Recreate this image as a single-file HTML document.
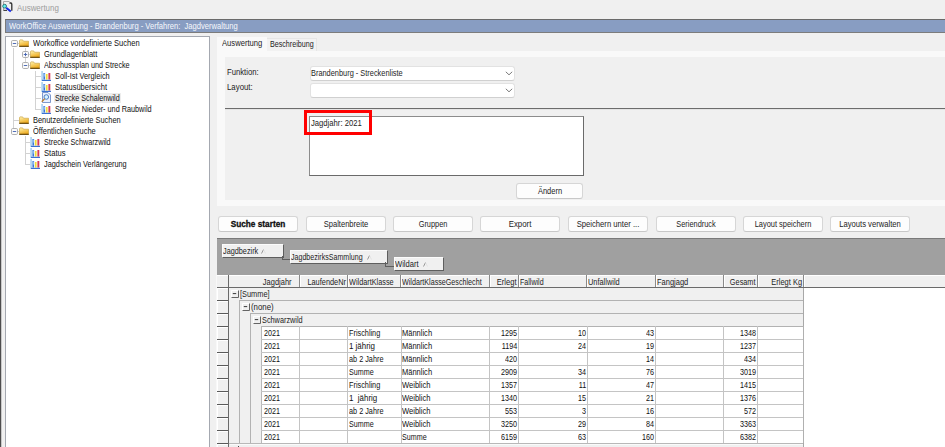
<!DOCTYPE html>
<html><head><meta charset="utf-8"><style>
html,body{margin:0;padding:0;width:945px;height:447px;overflow:hidden;background:#f0f0f0;position:relative}
body>div,body>svg{position:absolute}
.t{position:absolute;white-space:nowrap;font-family:"Liberation Sans",sans-serif;font-size:9px;line-height:9px;transform-origin:0 0}
.t.r{transform-origin:100% 0;text-align:right}
.t.c{text-align:center;transform-origin:50% 0}
</style></head><body>
<div style="left:0px;top:0px;width:1px;height:447px;background:#4d4d4d"></div>
<div style="left:1px;top:0px;width:1px;height:447px;background:#c8c8c8"></div>
<svg style="left:2px;top:0px" width="12" height="13" viewBox="0 0 12 13">
<path d="M1.5 10.5 V1.5 H7.5" fill="none" stroke="#a8a8a8" stroke-width="1"/>
<path d="M7.5 3 H8.8 Q9.8 3 9.8 4.2 V10.8" fill="none" stroke="#2e2e2e" stroke-width="1.3"/>
<path d="M1.5 10.4 H5" fill="none" stroke="#3a3a3a" stroke-width="1.1"/>
<line x1="4.2" y1="7.8" x2="8.8" y2="11.6" stroke="#1428e8" stroke-width="2"/>
<circle cx="2.6" cy="6.2" r="1.9" fill="#5ef2f2" stroke="#1e5a5a" stroke-width="0.8"/>
</svg>
<div class="t" style="left:17.0px;top:4px;font-size:9px;color:#9c9c9c;font-weight:normal;transform:scaleX(0.88);">Auswertung</div>
<div style="left:5px;top:19px;width:940px;height:14px;background:#889dc2;border-top:1px solid #6a6a6a;border-left:1px solid #7a7a7a;border-bottom:1px solid #7c7c7c;box-sizing:border-box"></div>
<div class="t" style="left:8.5px;top:22px;font-size:9px;color:#f6f8fc;font-weight:normal;transform:scaleX(0.843);">WorkOffice Auswertung - Brandenburg - Verfahren:&nbsp; Jagdverwaltung</div>
<div style="left:5px;top:36px;width:205px;height:420px;background:#fff;border:1px solid #a4a8b0;box-sizing:border-box"></div>
<div style="left:13px;top:48px;width:1px;height:80px;background:#d2d2d2"></div>
<div style="left:13px;top:120px;width:6px;height:1px;background:#d2d2d2"></div>
<div style="left:25px;top:48px;width:1px;height:14px;background:#d2d2d2"></div>
<div style="left:28px;top:54px;width:2px;height:1px;background:#d2d2d2"></div>
<div style="left:28px;top:65px;width:2px;height:1px;background:#d2d2d2"></div>
<div style="left:35px;top:71px;width:1px;height:39px;background:#d2d2d2"></div>
<div style="left:35px;top:76px;width:6px;height:1px;background:#d2d2d2"></div>
<div style="left:35px;top:87px;width:6px;height:1px;background:#d2d2d2"></div>
<div style="left:35px;top:98px;width:6px;height:1px;background:#d2d2d2"></div>
<div style="left:35px;top:109px;width:6px;height:1px;background:#d2d2d2"></div>
<div style="left:25px;top:136px;width:1px;height:29px;background:#d2d2d2"></div>
<div style="left:25px;top:142px;width:5px;height:1px;background:#d2d2d2"></div>
<div style="left:25px;top:153px;width:5px;height:1px;background:#d2d2d2"></div>
<div style="left:25px;top:164px;width:5px;height:1px;background:#d2d2d2"></div>
<div style="left:17px;top:43px;width:2px;height:1px;background:#d2d2d2"></div>
<div style="left:17px;top:131px;width:2px;height:1px;background:#d2d2d2"></div>
<div style="left:54px;top:93px;width:67px;height:10px;background:#ededed"></div>
<svg style="left:11px;top:40px" width="7" height="7" viewBox="0 0 7 7">
<rect x="0.5" y="0.5" width="6" height="6" rx="1.2" fill="#fbfbfb" stroke="#a8a8a8" stroke-width="0.9"/>
<line x1="1.8" y1="3.5" x2="5.2" y2="3.5" stroke="#4060b0" stroke-width="0.9"/></svg>
<svg style="left:19px;top:39px" width="10" height="8" viewBox="0 0 11 9" preserveAspectRatio="none">
<defs><linearGradient id="fg" x1="0" y1="0" x2="0.4" y2="1"><stop offset="0" stop-color="#fff4b0"/><stop offset="1" stop-color="#eeaa1c"/></linearGradient></defs>
<path d="M0.5 1.5 V8.5 H10.5 V2.5 H5 L4 1 H1 Z" fill="url(#fg)" stroke="#c8a040" stroke-width="0.7"/>
<rect x="0.3" y="7.6" width="10.4" height="1.2" fill="#5a3e08"/>
</svg>
<div class="t" style="left:32.5px;top:39px;font-size:9px;color:#101010;font-weight:normal;transform:scaleX(0.8383);">Workoffice vordefinierte Suchen</div>
<svg style="left:22px;top:51px" width="7" height="7" viewBox="0 0 7 7">
<rect x="0.5" y="0.5" width="6" height="6" rx="1.2" fill="#fbfbfb" stroke="#a8a8a8" stroke-width="0.9"/>
<line x1="1.8" y1="3.5" x2="5.2" y2="3.5" stroke="#4060b0" stroke-width="0.9"/><line x1="3.5" y1="1.8" x2="3.5" y2="5.2" stroke="#4060b0" stroke-width="0.9"/></svg>
<svg style="left:30px;top:50px" width="10" height="8" viewBox="0 0 11 9" preserveAspectRatio="none">
<defs><linearGradient id="fg" x1="0" y1="0" x2="0.4" y2="1"><stop offset="0" stop-color="#fff4b0"/><stop offset="1" stop-color="#eeaa1c"/></linearGradient></defs>
<path d="M0.5 1.5 V8.5 H10.5 V2.5 H5 L4 1 H1 Z" fill="url(#fg)" stroke="#c8a040" stroke-width="0.7"/>
<rect x="0.3" y="7.6" width="10.4" height="1.2" fill="#5a3e08"/>
</svg>
<div class="t" style="left:43.5px;top:50px;font-size:9px;color:#101010;font-weight:normal;transform:scaleX(0.8317);">Grundlagenblatt</div>
<svg style="left:22px;top:62px" width="7" height="7" viewBox="0 0 7 7">
<rect x="0.5" y="0.5" width="6" height="6" rx="1.2" fill="#fbfbfb" stroke="#a8a8a8" stroke-width="0.9"/>
<line x1="1.8" y1="3.5" x2="5.2" y2="3.5" stroke="#4060b0" stroke-width="0.9"/></svg>
<svg style="left:30px;top:61px" width="10" height="8" viewBox="0 0 11 9" preserveAspectRatio="none">
<defs><linearGradient id="fg" x1="0" y1="0" x2="0.4" y2="1"><stop offset="0" stop-color="#fff4b0"/><stop offset="1" stop-color="#eeaa1c"/></linearGradient></defs>
<path d="M0.5 1.5 V8.5 H10.5 V2.5 H5 L4 1 H1 Z" fill="url(#fg)" stroke="#c8a040" stroke-width="0.7"/>
<rect x="0.3" y="7.6" width="10.4" height="1.2" fill="#5a3e08"/>
</svg>
<div class="t" style="left:43.5px;top:61px;font-size:9px;color:#101010;font-weight:normal;transform:scaleX(0.8036);">Abschussplan und Strecke</div>
<svg style="left:41px;top:71px" width="10" height="10" viewBox="0 0 10 10">
<rect x="0.2" y="0" width="1.8" height="10" fill="#b4d6f2"/>
<rect x="2.4" y="2" width="1.7" height="6.6" fill="#3c7ad8"/>
<rect x="2.9" y="2.6" width="0.6" height="3" fill="#c8f4ff"/>
<rect x="4.9" y="3" width="1.7" height="5.6" fill="#f2dc38"/>
<rect x="7.4" y="2" width="1.9" height="6.6" fill="#d63a58"/>
<rect x="1" y="8.8" width="9" height="1.2" fill="#3a72d2"/>
</svg>
<div class="t" style="left:54.5px;top:72px;font-size:9px;color:#101010;font-weight:normal;transform:scaleX(0.8153);">Soll-Ist Vergleich</div>
<svg style="left:41px;top:82px" width="10" height="10" viewBox="0 0 10 10">
<rect x="0.2" y="0" width="1.8" height="10" fill="#b4d6f2"/>
<rect x="2.4" y="2" width="1.7" height="6.6" fill="#3c7ad8"/>
<rect x="2.9" y="2.6" width="0.6" height="3" fill="#c8f4ff"/>
<rect x="4.9" y="3" width="1.7" height="5.6" fill="#f2dc38"/>
<rect x="7.4" y="2" width="1.9" height="6.6" fill="#d63a58"/>
<rect x="1" y="8.8" width="9" height="1.2" fill="#3a72d2"/>
</svg>
<div class="t" style="left:54.5px;top:83px;font-size:9px;color:#101010;font-weight:normal;transform:scaleX(0.8392);">Statusübersicht</div>
<svg style="left:41px;top:92px" width="10" height="11" viewBox="0 0 10 11">
<path d="M1.5 0.5 H7 L9.5 3 V10.5 H1.5 Z" fill="#e8f0ff" stroke="#6080c0" stroke-width="0.8"/>
<circle cx="5.3" cy="5" r="2.3" fill="#d8f4ff" stroke="#4070c0" stroke-width="0.9"/>
<line x1="3.6" y1="6.8" x2="0.8" y2="9.8" stroke="#c08030" stroke-width="1.3"/>
</svg>
<div class="t" style="left:54.5px;top:94px;font-size:9px;color:#101010;font-weight:normal;transform:scaleX(0.7975);">Strecke Schalenwild</div>
<svg style="left:41px;top:104px" width="10" height="10" viewBox="0 0 10 10">
<rect x="0.2" y="0" width="1.8" height="10" fill="#b4d6f2"/>
<rect x="2.4" y="2" width="1.7" height="6.6" fill="#3c7ad8"/>
<rect x="2.9" y="2.6" width="0.6" height="3" fill="#c8f4ff"/>
<rect x="4.9" y="3" width="1.7" height="5.6" fill="#f2dc38"/>
<rect x="7.4" y="2" width="1.9" height="6.6" fill="#d63a58"/>
<rect x="1" y="8.8" width="9" height="1.2" fill="#3a72d2"/>
</svg>
<div class="t" style="left:54.5px;top:105px;font-size:9px;color:#101010;font-weight:normal;transform:scaleX(0.8083);">Strecke Nieder- und Raubwild</div>
<svg style="left:19px;top:116px" width="10" height="8" viewBox="0 0 11 9" preserveAspectRatio="none">
<defs><linearGradient id="fg" x1="0" y1="0" x2="0.4" y2="1"><stop offset="0" stop-color="#fff4b0"/><stop offset="1" stop-color="#eeaa1c"/></linearGradient></defs>
<path d="M0.5 1.5 V8.5 H10.5 V2.5 H5 L4 1 H1 Z" fill="url(#fg)" stroke="#c8a040" stroke-width="0.7"/>
<rect x="0.3" y="7.6" width="10.4" height="1.2" fill="#5a3e08"/>
</svg>
<div class="t" style="left:32.5px;top:116px;font-size:9px;color:#101010;font-weight:normal;transform:scaleX(0.8264);">Benutzerdefinierte Suchen</div>
<svg style="left:11px;top:128px" width="7" height="7" viewBox="0 0 7 7">
<rect x="0.5" y="0.5" width="6" height="6" rx="1.2" fill="#fbfbfb" stroke="#a8a8a8" stroke-width="0.9"/>
<line x1="1.8" y1="3.5" x2="5.2" y2="3.5" stroke="#4060b0" stroke-width="0.9"/></svg>
<svg style="left:19px;top:127px" width="10" height="8" viewBox="0 0 11 9" preserveAspectRatio="none">
<defs><linearGradient id="fg" x1="0" y1="0" x2="0.4" y2="1"><stop offset="0" stop-color="#fff4b0"/><stop offset="1" stop-color="#eeaa1c"/></linearGradient></defs>
<path d="M0.5 1.5 V8.5 H10.5 V2.5 H5 L4 1 H1 Z" fill="url(#fg)" stroke="#c8a040" stroke-width="0.7"/>
<rect x="0.3" y="7.6" width="10.4" height="1.2" fill="#5a3e08"/>
</svg>
<div class="t" style="left:32.5px;top:127px;font-size:9px;color:#101010;font-weight:normal;transform:scaleX(0.8257);">Öffentlichen Suche</div>
<svg style="left:30px;top:137px" width="10" height="10" viewBox="0 0 10 10">
<rect x="0.2" y="0" width="1.8" height="10" fill="#b4d6f2"/>
<rect x="2.4" y="2" width="1.7" height="6.6" fill="#3c7ad8"/>
<rect x="2.9" y="2.6" width="0.6" height="3" fill="#c8f4ff"/>
<rect x="4.9" y="3" width="1.7" height="5.6" fill="#f2dc38"/>
<rect x="7.4" y="2" width="1.9" height="6.6" fill="#d63a58"/>
<rect x="1" y="8.8" width="9" height="1.2" fill="#3a72d2"/>
</svg>
<div class="t" style="left:43.5px;top:138px;font-size:9px;color:#101010;font-weight:normal;transform:scaleX(0.8026);">Strecke Schwarzwild</div>
<svg style="left:30px;top:148px" width="10" height="10" viewBox="0 0 10 10">
<rect x="0.2" y="0" width="1.8" height="10" fill="#b4d6f2"/>
<rect x="2.4" y="2" width="1.7" height="6.6" fill="#3c7ad8"/>
<rect x="2.9" y="2.6" width="0.6" height="3" fill="#c8f4ff"/>
<rect x="4.9" y="3" width="1.7" height="5.6" fill="#f2dc38"/>
<rect x="7.4" y="2" width="1.9" height="6.6" fill="#d63a58"/>
<rect x="1" y="8.8" width="9" height="1.2" fill="#3a72d2"/>
</svg>
<div class="t" style="left:43.5px;top:149px;font-size:9px;color:#101010;font-weight:normal;transform:scaleX(0.8497);">Status</div>
<svg style="left:30px;top:159px" width="10" height="10" viewBox="0 0 10 10">
<rect x="0.2" y="0" width="1.8" height="10" fill="#b4d6f2"/>
<rect x="2.4" y="2" width="1.7" height="6.6" fill="#3c7ad8"/>
<rect x="2.9" y="2.6" width="0.6" height="3" fill="#c8f4ff"/>
<rect x="4.9" y="3" width="1.7" height="5.6" fill="#f2dc38"/>
<rect x="7.4" y="2" width="1.9" height="6.6" fill="#d63a58"/>
<rect x="1" y="8.8" width="9" height="1.2" fill="#3a72d2"/>
</svg>
<div class="t" style="left:43.5px;top:160px;font-size:9px;color:#101010;font-weight:normal;transform:scaleX(0.8137);">Jagdschein Verlängerung</div>
<div style="left:217px;top:37px;width:50px;height:14px;background:#f9f9f9"></div>
<div class="t" style="left:221.5px;top:39px;font-size:9px;color:#1c1c1c;font-weight:normal;transform:scaleX(0.8474);">Auswertung</div>
<div style="left:267px;top:38px;width:50px;height:13px;background:#f2f2f2;border-top:1px solid #e6e6e6;border-right:1px solid #e6e6e6;box-sizing:border-box"></div>
<div class="t" style="left:269.5px;top:40px;font-size:9px;color:#1c1c1c;font-weight:normal;transform:scaleX(0.7927);">Beschreibung</div>
<div style="left:217px;top:51px;width:728px;height:155px;background:#f9f9f9"></div>
<div style="left:225px;top:57px;width:720px;height:143px;background:#f0f0f0"></div>
<div class="t" style="left:226.5px;top:68px;font-size:9px;color:#1c1c1c;font-weight:normal;transform:scaleX(0.8556);">Funktion:</div>
<div class="t" style="left:226.5px;top:83px;font-size:9px;color:#1c1c1c;font-weight:normal;transform:scaleX(0.8701);">Layout:</div>
<div style="left:310px;top:66px;width:205px;height:15px;background:#fff;border:1px solid #e2e2e2;border-bottom-color:#d0d0d0;border-radius:3px;box-sizing:border-box"></div>
<svg style="left:505px;top:71px" width="8" height="5" viewBox="0 0 8 5"><path d="M0.8 0.8 L4 3.8 L7.2 0.8" fill="none" stroke="#7a7a7a" stroke-width="1"/></svg>
<div class="t" style="left:311.2px;top:69px;font-size:9px;color:#1c1c1c;font-weight:normal;transform:scaleX(0.8216);">Brandenburg - Streckenliste</div>
<div style="left:310px;top:83px;width:205px;height:15px;background:#fff;border:1px solid #e2e2e2;border-bottom-color:#d0d0d0;border-radius:3px;box-sizing:border-box"></div>
<svg style="left:505px;top:88px" width="8" height="5" viewBox="0 0 8 5"><path d="M0.8 0.8 L4 3.8 L7.2 0.8" fill="none" stroke="#7a7a7a" stroke-width="1"/></svg>
<div style="left:225px;top:108px;width:720px;height:1px;background:#6c6c6c"></div>
<div style="left:225px;top:109px;width:720px;height:1px;background:#e4e4e4"></div>
<div style="left:309px;top:116px;width:275px;height:60px;background:#fff;border:1px solid #8c8c8c;border-right-color:#6a6a6a;border-bottom-color:#6a6a6a;box-sizing:border-box"></div>
<div class="t" style="left:310.5px;top:119px;font-size:9px;color:#1c1c1c;font-weight:normal;transform:scaleX(0.8511);">Jagdjahr: 2021</div>
<div style="left:304px;top:110px;width:68px;height:25px;border:3px solid #ff0000;box-sizing:border-box"></div>
<div style="left:516px;top:183px;width:67px;height:16px;background:#fdfdfd;border:1px solid #d6d6d6;border-bottom-color:#c8c8c8;border-radius:3px;box-sizing:border-box"></div>
<div class="t c" style="left:349.5px;width:400px;top:187px;font-size:9px;color:#1c1c1c;font-weight:normal;transform:scaleX(0.8324);">Ändern</div>
<div style="left:218px;top:216px;width:80px;height:16px;background:#fdfdfd;border:1px solid #d6d6d6;border-bottom-color:#c8c8c8;border-radius:3px;box-sizing:border-box"></div>
<div class="t c" style="left:58.0px;width:400px;top:220px;font-size:9px;color:#0a0a0a;font-weight:bold;transform:scaleX(0.9194);-webkit-text-stroke:0.3px #111;">Suche starten</div>
<div style="left:306px;top:216px;width:80px;height:16px;background:#fdfdfd;border:1px solid #d6d6d6;border-bottom-color:#c8c8c8;border-radius:3px;box-sizing:border-box"></div>
<div class="t c" style="left:146.0px;width:400px;top:220px;font-size:9px;color:#1c1c1c;font-weight:normal;transform:scaleX(0.8422);">Spaltenbreite</div>
<div style="left:393px;top:216px;width:80px;height:16px;background:#fdfdfd;border:1px solid #d6d6d6;border-bottom-color:#c8c8c8;border-radius:3px;box-sizing:border-box"></div>
<div class="t c" style="left:233.0px;width:400px;top:220px;font-size:9px;color:#1c1c1c;font-weight:normal;transform:scaleX(0.818);">Gruppen</div>
<div style="left:480px;top:216px;width:80px;height:16px;background:#fdfdfd;border:1px solid #d6d6d6;border-bottom-color:#c8c8c8;border-radius:3px;box-sizing:border-box"></div>
<div class="t c" style="left:320.0px;width:400px;top:220px;font-size:9px;color:#1c1c1c;font-weight:normal;transform:scaleX(0.8725);">Export</div>
<div style="left:568px;top:216px;width:80px;height:16px;background:#fdfdfd;border:1px solid #d6d6d6;border-bottom-color:#c8c8c8;border-radius:3px;box-sizing:border-box"></div>
<div class="t c" style="left:408.0px;width:400px;top:220px;font-size:9px;color:#1c1c1c;font-weight:normal;transform:scaleX(0.8523);">Speichern unter ...</div>
<div style="left:656px;top:216px;width:80px;height:16px;background:#fdfdfd;border:1px solid #d6d6d6;border-bottom-color:#c8c8c8;border-radius:3px;box-sizing:border-box"></div>
<div class="t c" style="left:496.0px;width:400px;top:220px;font-size:9px;color:#1c1c1c;font-weight:normal;transform:scaleX(0.8173);">Seriendruck</div>
<div style="left:743px;top:216px;width:80px;height:16px;background:#fdfdfd;border:1px solid #d6d6d6;border-bottom-color:#c8c8c8;border-radius:3px;box-sizing:border-box"></div>
<div class="t c" style="left:583.0px;width:400px;top:220px;font-size:9px;color:#1c1c1c;font-weight:normal;transform:scaleX(0.8266);">Layout speichern</div>
<div style="left:830px;top:216px;width:80px;height:16px;background:#fdfdfd;border:1px solid #d6d6d6;border-bottom-color:#c8c8c8;border-radius:3px;box-sizing:border-box"></div>
<div class="t c" style="left:670.0px;width:400px;top:220px;font-size:9px;color:#1c1c1c;font-weight:normal;transform:scaleX(0.8502);">Layouts verwalten</div>
<div style="left:217px;top:238px;width:728px;height:37px;background:#a0a0a0;border-top:1px solid #7a7a7a;box-sizing:border-box"></div>
<div style="left:223px;top:245px;width:61px;height:13px;background:#5e5e5e"></div>
<div style="left:222px;top:244px;width:61px;height:13px;background:#f0f0f0;border-top:1px solid #fbfbfb;border-left:1px solid #fbfbfb;box-sizing:border-box"></div>
<div class="t" style="left:223.0px;top:247px;font-size:9px;color:#1c1c1c;font-weight:normal;transform:scaleX(0.8097);">Jagdbezirk</div>
<div style="left:291px;top:251px;width:97px;height:13px;background:#5e5e5e"></div>
<div style="left:290px;top:250px;width:97px;height:13px;background:#f0f0f0;border-top:1px solid #fbfbfb;border-left:1px solid #fbfbfb;box-sizing:border-box"></div>
<div class="t" style="left:291.0px;top:253px;font-size:9px;color:#1c1c1c;font-weight:normal;transform:scaleX(0.7867);">JagdbezirksSammlung</div>
<div style="left:395px;top:258px;width:49px;height:13px;background:#5e5e5e"></div>
<div style="left:394px;top:257px;width:49px;height:13px;background:#f0f0f0;border-top:1px solid #fbfbfb;border-left:1px solid #fbfbfb;box-sizing:border-box"></div>
<div class="t" style="left:395.0px;top:260px;font-size:9px;color:#1c1c1c;font-weight:normal;transform:scaleX(0.8451);">Wildart</div>
<svg style="left:261px;top:249px" width="5" height="5" viewBox="0 0 5 5"><path d="M0.5 4.5 L2.5 0.5" stroke="#8c8c8c" stroke-width="0.9"/><path d="M2.5 0.5 L4.5 4.5" stroke="#dcdcdc" stroke-width="0.7"/></svg>
<svg style="left:367px;top:255px" width="5" height="5" viewBox="0 0 5 5"><path d="M0.5 4.5 L2.5 0.5" stroke="#8c8c8c" stroke-width="0.9"/><path d="M2.5 0.5 L4.5 4.5" stroke="#dcdcdc" stroke-width="0.7"/></svg>
<svg style="left:423px;top:262px" width="5" height="5" viewBox="0 0 5 5"><path d="M0.5 4.5 L2.5 0.5" stroke="#8c8c8c" stroke-width="0.9"/><path d="M2.5 0.5 L4.5 4.5" stroke="#dcdcdc" stroke-width="0.7"/></svg>
<div style="left:282px;top:256px;width:1px;height:4px;background:#5e5e5e"></div>
<div style="left:282px;top:259px;width:8px;height:1px;background:#5e5e5e"></div>
<div style="left:385px;top:262px;width:1px;height:5px;background:#5e5e5e"></div>
<div style="left:385px;top:266px;width:9px;height:1px;background:#5e5e5e"></div>
<div style="left:217px;top:275px;width:728px;height:172px;background:#fff"></div>
<div style="left:217px;top:275px;width:728px;height:12px;background:#f0f0f0;border-top:1px solid #ffffff;box-sizing:border-box"></div>
<div style="left:217px;top:287px;width:728px;height:1px;background:#6a6a6a"></div>
<div style="left:217px;top:288px;width:11px;height:159px;background:#f0f0f0"></div>
<div style="left:216px;top:275px;width:1px;height:172px;background:#f8f8f8"></div>
<div style="left:228px;top:275px;width:1px;height:172px;background:#6a6a6a"></div>
<div style="left:217px;top:288px;width:1px;height:159px;background:#ffffff"></div>
<div style="left:218px;top:288px;width:10px;height:1px;background:#ffffff"></div>
<div style="left:217px;top:300px;width:11px;height:1px;background:#5a5a5a"></div>
<div style="left:218px;top:301px;width:10px;height:1px;background:#ffffff"></div>
<div style="left:217px;top:313px;width:11px;height:1px;background:#5a5a5a"></div>
<div style="left:218px;top:314px;width:10px;height:1px;background:#ffffff"></div>
<div style="left:217px;top:326px;width:11px;height:1px;background:#5a5a5a"></div>
<div style="left:218px;top:327px;width:10px;height:1px;background:#ffffff"></div>
<div style="left:217px;top:339px;width:11px;height:1px;background:#5a5a5a"></div>
<div style="left:218px;top:340px;width:10px;height:1px;background:#ffffff"></div>
<div style="left:217px;top:352px;width:11px;height:1px;background:#5a5a5a"></div>
<div style="left:218px;top:353px;width:10px;height:1px;background:#ffffff"></div>
<div style="left:217px;top:365px;width:11px;height:1px;background:#5a5a5a"></div>
<div style="left:218px;top:366px;width:10px;height:1px;background:#ffffff"></div>
<div style="left:217px;top:378px;width:11px;height:1px;background:#5a5a5a"></div>
<div style="left:218px;top:379px;width:10px;height:1px;background:#ffffff"></div>
<div style="left:217px;top:391px;width:11px;height:1px;background:#5a5a5a"></div>
<div style="left:218px;top:392px;width:10px;height:1px;background:#ffffff"></div>
<div style="left:217px;top:404px;width:11px;height:1px;background:#5a5a5a"></div>
<div style="left:218px;top:405px;width:10px;height:1px;background:#ffffff"></div>
<div style="left:217px;top:417px;width:11px;height:1px;background:#5a5a5a"></div>
<div style="left:218px;top:418px;width:10px;height:1px;background:#ffffff"></div>
<div style="left:217px;top:430px;width:11px;height:1px;background:#5a5a5a"></div>
<div style="left:218px;top:431px;width:10px;height:1px;background:#ffffff"></div>
<div style="left:217px;top:443px;width:11px;height:1px;background:#5a5a5a"></div>
<div style="left:218px;top:444px;width:10px;height:1px;background:#ffffff"></div>
<div style="left:299px;top:275px;width:1px;height:12px;background:#8a8a8a"></div>
<div style="left:300px;top:275px;width:1px;height:12px;background:#ffffff"></div>
<div style="left:347px;top:275px;width:1px;height:12px;background:#8a8a8a"></div>
<div style="left:348px;top:275px;width:1px;height:12px;background:#ffffff"></div>
<div style="left:400px;top:275px;width:1px;height:12px;background:#8a8a8a"></div>
<div style="left:401px;top:275px;width:1px;height:12px;background:#ffffff"></div>
<div style="left:489px;top:275px;width:1px;height:12px;background:#8a8a8a"></div>
<div style="left:490px;top:275px;width:1px;height:12px;background:#ffffff"></div>
<div style="left:518px;top:275px;width:1px;height:12px;background:#8a8a8a"></div>
<div style="left:519px;top:275px;width:1px;height:12px;background:#ffffff"></div>
<div style="left:586px;top:275px;width:1px;height:12px;background:#8a8a8a"></div>
<div style="left:587px;top:275px;width:1px;height:12px;background:#ffffff"></div>
<div style="left:655px;top:275px;width:1px;height:12px;background:#8a8a8a"></div>
<div style="left:656px;top:275px;width:1px;height:12px;background:#ffffff"></div>
<div style="left:723px;top:275px;width:1px;height:12px;background:#8a8a8a"></div>
<div style="left:724px;top:275px;width:1px;height:12px;background:#ffffff"></div>
<div style="left:757px;top:275px;width:1px;height:12px;background:#8a8a8a"></div>
<div style="left:758px;top:275px;width:1px;height:12px;background:#ffffff"></div>
<div style="left:803px;top:275px;width:1px;height:12px;background:#8a8a8a"></div>
<div style="left:804px;top:275px;width:1px;height:12px;background:#ffffff"></div>
<div class="t r" style="right:653.0px;top:278px;font-size:9px;color:#1c1c1c;font-weight:normal;transform:scaleX(0.8301);">Jagdjahr</div>
<div class="t r" style="right:599.0px;top:278px;font-size:9px;color:#1c1c1c;font-weight:normal;transform:scaleX(0.8217);">LaufendeNr</div>
<div class="t" style="left:348.5px;top:278px;font-size:9px;color:#1c1c1c;font-weight:normal;transform:scaleX(0.8116);">WildartKlasse</div>
<div class="t" style="left:401.5px;top:278px;font-size:9px;color:#1c1c1c;font-weight:normal;transform:scaleX(0.796);">WildartKlasseGeschlecht</div>
<div class="t r" style="right:428.0px;top:278px;font-size:9px;color:#1c1c1c;font-weight:normal;transform:scaleX(0.8364);">Erlegt</div>
<div class="t" style="left:519.5px;top:278px;font-size:9px;color:#1c1c1c;font-weight:normal;transform:scaleX(0.7872);">Fallwild</div>
<div class="t" style="left:587.5px;top:278px;font-size:9px;color:#1c1c1c;font-weight:normal;transform:scaleX(0.8219);">Unfallwild</div>
<div class="t" style="left:656.5px;top:278px;font-size:9px;color:#1c1c1c;font-weight:normal;transform:scaleX(0.8331);">Fangjagd</div>
<div class="t r" style="right:189.0px;top:278px;font-size:9px;color:#1c1c1c;font-weight:normal;transform:scaleX(0.8139);">Gesamt</div>
<div class="t r" style="right:143.0px;top:278px;font-size:9px;color:#1c1c1c;font-weight:normal;transform:scaleX(0.828);">Erlegt Kg</div>
<div style="left:229px;top:288px;width:574px;height:159px;background:#f0f0f0"></div>
<div style="left:803px;top:288px;width:1px;height:159px;background:#a8a8a8"></div>
<div style="left:239px;top:300px;width:564px;height:1px;background:#b2b2b2"></div>
<div style="left:239px;top:300px;width:1px;height:143px;background:#b2b2b2"></div>
<div style="left:250px;top:313px;width:553px;height:1px;background:#b2b2b2"></div>
<div style="left:250px;top:313px;width:1px;height:130px;background:#b2b2b2"></div>
<div style="left:261px;top:326px;width:542px;height:117px;background:#fff"></div>
<div style="left:261px;top:326px;width:542px;height:1px;background:#b2b2b2"></div>
<div style="left:261px;top:326px;width:1px;height:117px;background:#b8b8b8"></div>
<div style="left:229px;top:443px;width:574px;height:1px;background:#b8b8b8"></div>
<div style="left:230px;top:444px;width:573px;height:1px;background:#fafafa"></div>
<div style="left:238px;top:446px;width:1px;height:1px;background:#404040"></div>
<svg style="left:231px;top:290px" width="8" height="8" viewBox="0 0 8 8"><rect x="0" y="0" width="8" height="8" fill="#f0f0f0"/><path d="M0.5 7.5 V0.5 H7.5" fill="none" stroke="#ffffff" stroke-width="1"/><path d="M0.5 7.5 H7.5 V0.5" fill="none" stroke="#646464" stroke-width="1"/><line x1="1.8" y1="3.6" x2="5.2" y2="3.6" stroke="#3a3a3a" stroke-width="1"/></svg>
<div class="t" style="left:239.5px;top:290px;font-size:9px;color:#1c1c1c;font-weight:normal;transform:scaleX(0.8235);">[Summe]</div>
<svg style="left:242px;top:303px" width="8" height="8" viewBox="0 0 8 8"><rect x="0" y="0" width="8" height="8" fill="#f0f0f0"/><path d="M0.5 7.5 V0.5 H7.5" fill="none" stroke="#ffffff" stroke-width="1"/><path d="M0.5 7.5 H7.5 V0.5" fill="none" stroke="#646464" stroke-width="1"/><line x1="1.8" y1="3.6" x2="5.2" y2="3.6" stroke="#3a3a3a" stroke-width="1"/></svg>
<div class="t" style="left:250.5px;top:303px;font-size:9px;color:#1c1c1c;font-weight:normal;transform:scaleX(0.8725);">(none)</div>
<svg style="left:253px;top:316px" width="8" height="8" viewBox="0 0 8 8"><rect x="0" y="0" width="8" height="8" fill="#f0f0f0"/><path d="M0.5 7.5 V0.5 H7.5" fill="none" stroke="#ffffff" stroke-width="1"/><path d="M0.5 7.5 H7.5 V0.5" fill="none" stroke="#646464" stroke-width="1"/><line x1="1.8" y1="3.6" x2="5.2" y2="3.6" stroke="#3a3a3a" stroke-width="1"/></svg>
<div class="t" style="left:261.5px;top:316px;font-size:9px;color:#1c1c1c;font-weight:normal;transform:scaleX(0.8128);">Schwarzwild</div>
<div class="t" style="left:263.5px;top:329px;font-size:9px;color:#111;font-weight:normal;transform:scaleX(0.8);">2021</div>
<div class="t" style="left:349.2px;top:329px;font-size:9px;color:#111;font-weight:normal;transform:scaleX(0.8113);">Frischling</div>
<div class="t" style="left:402.3px;top:329px;font-size:9px;color:#111;font-weight:normal;transform:scaleX(0.8345);">Männlich</div>
<div class="t r" style="right:428.0px;top:329px;font-size:9px;color:#111;font-weight:normal;transform:scaleX(0.8);">1295</div>
<div class="t r" style="right:359.0px;top:329px;font-size:9px;color:#111;font-weight:normal;transform:scaleX(0.8);">10</div>
<div class="t r" style="right:291.0px;top:329px;font-size:9px;color:#111;font-weight:normal;transform:scaleX(0.8);">43</div>
<div class="t r" style="right:189.0px;top:329px;font-size:9px;color:#111;font-weight:normal;transform:scaleX(0.8);">1348</div>
<div style="left:261px;top:339px;width:542px;height:1px;background:#c4c4c4"></div>
<div class="t" style="left:263.5px;top:342px;font-size:9px;color:#111;font-weight:normal;transform:scaleX(0.8);">2021</div>
<div class="t" style="left:349.2px;top:342px;font-size:9px;color:#111;font-weight:normal;transform:scaleX(0.8806);">1 jährig</div>
<div class="t" style="left:402.3px;top:342px;font-size:9px;color:#111;font-weight:normal;transform:scaleX(0.8345);">Männlich</div>
<div class="t r" style="right:428.0px;top:342px;font-size:9px;color:#111;font-weight:normal;transform:scaleX(0.8);">1194</div>
<div class="t r" style="right:359.0px;top:342px;font-size:9px;color:#111;font-weight:normal;transform:scaleX(0.8);">24</div>
<div class="t r" style="right:291.0px;top:342px;font-size:9px;color:#111;font-weight:normal;transform:scaleX(0.8);">19</div>
<div class="t r" style="right:189.0px;top:342px;font-size:9px;color:#111;font-weight:normal;transform:scaleX(0.8);">1237</div>
<div style="left:261px;top:352px;width:542px;height:1px;background:#c4c4c4"></div>
<div class="t" style="left:263.5px;top:355px;font-size:9px;color:#111;font-weight:normal;transform:scaleX(0.8);">2021</div>
<div class="t" style="left:349.2px;top:355px;font-size:9px;color:#111;font-weight:normal;transform:scaleX(0.8099);">ab 2 Jahre</div>
<div class="t" style="left:402.3px;top:355px;font-size:9px;color:#111;font-weight:normal;transform:scaleX(0.8345);">Männlich</div>
<div class="t r" style="right:428.0px;top:355px;font-size:9px;color:#111;font-weight:normal;transform:scaleX(0.8);">420</div>
<div class="t r" style="right:291.0px;top:355px;font-size:9px;color:#111;font-weight:normal;transform:scaleX(0.8);">14</div>
<div class="t r" style="right:189.0px;top:355px;font-size:9px;color:#111;font-weight:normal;transform:scaleX(0.8);">434</div>
<div style="left:261px;top:365px;width:542px;height:1px;background:#c4c4c4"></div>
<div class="t" style="left:263.5px;top:368px;font-size:9px;color:#111;font-weight:normal;transform:scaleX(0.8);">2021</div>
<div class="t" style="left:349.2px;top:368px;font-size:9px;color:#111;font-weight:normal;transform:scaleX(0.7943);">Summe</div>
<div class="t" style="left:402.3px;top:368px;font-size:9px;color:#111;font-weight:normal;transform:scaleX(0.8345);">Männlich</div>
<div class="t r" style="right:428.0px;top:368px;font-size:9px;color:#111;font-weight:normal;transform:scaleX(0.8);">2909</div>
<div class="t r" style="right:359.0px;top:368px;font-size:9px;color:#111;font-weight:normal;transform:scaleX(0.8);">34</div>
<div class="t r" style="right:291.0px;top:368px;font-size:9px;color:#111;font-weight:normal;transform:scaleX(0.8);">76</div>
<div class="t r" style="right:189.0px;top:368px;font-size:9px;color:#111;font-weight:normal;transform:scaleX(0.8);">3019</div>
<div style="left:261px;top:378px;width:542px;height:1px;background:#c4c4c4"></div>
<div class="t" style="left:263.5px;top:381px;font-size:9px;color:#111;font-weight:normal;transform:scaleX(0.8);">2021</div>
<div class="t" style="left:349.2px;top:381px;font-size:9px;color:#111;font-weight:normal;transform:scaleX(0.8113);">Frischling</div>
<div class="t" style="left:402.3px;top:381px;font-size:9px;color:#111;font-weight:normal;transform:scaleX(0.8409);">Weiblich</div>
<div class="t r" style="right:428.0px;top:381px;font-size:9px;color:#111;font-weight:normal;transform:scaleX(0.8);">1357</div>
<div class="t r" style="right:359.0px;top:381px;font-size:9px;color:#111;font-weight:normal;transform:scaleX(0.8);">11</div>
<div class="t r" style="right:291.0px;top:381px;font-size:9px;color:#111;font-weight:normal;transform:scaleX(0.8);">47</div>
<div class="t r" style="right:189.0px;top:381px;font-size:9px;color:#111;font-weight:normal;transform:scaleX(0.8);">1415</div>
<div style="left:261px;top:391px;width:542px;height:1px;background:#c4c4c4"></div>
<div class="t" style="left:263.5px;top:394px;font-size:9px;color:#111;font-weight:normal;transform:scaleX(0.8);">2021</div>
<div class="t" style="left:349.2px;top:394px;font-size:9px;color:#111;font-weight:normal;transform:scaleX(0.8805);">1&nbsp; jährig</div>
<div class="t" style="left:402.3px;top:394px;font-size:9px;color:#111;font-weight:normal;transform:scaleX(0.8409);">Weiblich</div>
<div class="t r" style="right:428.0px;top:394px;font-size:9px;color:#111;font-weight:normal;transform:scaleX(0.8);">1340</div>
<div class="t r" style="right:359.0px;top:394px;font-size:9px;color:#111;font-weight:normal;transform:scaleX(0.8);">15</div>
<div class="t r" style="right:291.0px;top:394px;font-size:9px;color:#111;font-weight:normal;transform:scaleX(0.8);">21</div>
<div class="t r" style="right:189.0px;top:394px;font-size:9px;color:#111;font-weight:normal;transform:scaleX(0.8);">1376</div>
<div style="left:261px;top:404px;width:542px;height:1px;background:#c4c4c4"></div>
<div class="t" style="left:263.5px;top:407px;font-size:9px;color:#111;font-weight:normal;transform:scaleX(0.8);">2021</div>
<div class="t" style="left:349.2px;top:407px;font-size:9px;color:#111;font-weight:normal;transform:scaleX(0.8099);">ab 2 Jahre</div>
<div class="t" style="left:402.3px;top:407px;font-size:9px;color:#111;font-weight:normal;transform:scaleX(0.8409);">Weiblich</div>
<div class="t r" style="right:428.0px;top:407px;font-size:9px;color:#111;font-weight:normal;transform:scaleX(0.8);">553</div>
<div class="t r" style="right:359.0px;top:407px;font-size:9px;color:#111;font-weight:normal;transform:scaleX(0.8);">3</div>
<div class="t r" style="right:291.0px;top:407px;font-size:9px;color:#111;font-weight:normal;transform:scaleX(0.8);">16</div>
<div class="t r" style="right:189.0px;top:407px;font-size:9px;color:#111;font-weight:normal;transform:scaleX(0.8);">572</div>
<div style="left:261px;top:417px;width:542px;height:1px;background:#c4c4c4"></div>
<div class="t" style="left:263.5px;top:420px;font-size:9px;color:#111;font-weight:normal;transform:scaleX(0.8);">2021</div>
<div class="t" style="left:349.2px;top:420px;font-size:9px;color:#111;font-weight:normal;transform:scaleX(0.7943);">Summe</div>
<div class="t" style="left:402.3px;top:420px;font-size:9px;color:#111;font-weight:normal;transform:scaleX(0.8409);">Weiblich</div>
<div class="t r" style="right:428.0px;top:420px;font-size:9px;color:#111;font-weight:normal;transform:scaleX(0.8);">3250</div>
<div class="t r" style="right:359.0px;top:420px;font-size:9px;color:#111;font-weight:normal;transform:scaleX(0.8);">29</div>
<div class="t r" style="right:291.0px;top:420px;font-size:9px;color:#111;font-weight:normal;transform:scaleX(0.8);">84</div>
<div class="t r" style="right:189.0px;top:420px;font-size:9px;color:#111;font-weight:normal;transform:scaleX(0.8);">3363</div>
<div style="left:261px;top:430px;width:542px;height:1px;background:#c4c4c4"></div>
<div class="t" style="left:263.5px;top:433px;font-size:9px;color:#111;font-weight:normal;transform:scaleX(0.8);">2021</div>
<div class="t" style="left:402.3px;top:433px;font-size:9px;color:#111;font-weight:normal;transform:scaleX(0.7943);">Summe</div>
<div class="t r" style="right:428.0px;top:433px;font-size:9px;color:#111;font-weight:normal;transform:scaleX(0.8);">6159</div>
<div class="t r" style="right:359.0px;top:433px;font-size:9px;color:#111;font-weight:normal;transform:scaleX(0.8);">63</div>
<div class="t r" style="right:291.0px;top:433px;font-size:9px;color:#111;font-weight:normal;transform:scaleX(0.8);">160</div>
<div class="t r" style="right:189.0px;top:433px;font-size:9px;color:#111;font-weight:normal;transform:scaleX(0.8);">6382</div>
<div style="left:299px;top:326px;width:1px;height:117px;background:#c4c4c4"></div>
<div style="left:347px;top:326px;width:1px;height:117px;background:#c4c4c4"></div>
<div style="left:401px;top:326px;width:1px;height:117px;background:#c4c4c4"></div>
<div style="left:489px;top:326px;width:1px;height:117px;background:#c4c4c4"></div>
<div style="left:518px;top:326px;width:1px;height:117px;background:#c4c4c4"></div>
<div style="left:587px;top:326px;width:1px;height:117px;background:#c4c4c4"></div>
<div style="left:655px;top:326px;width:1px;height:117px;background:#c4c4c4"></div>
<div style="left:723px;top:326px;width:1px;height:117px;background:#c4c4c4"></div>
<div style="left:757px;top:326px;width:1px;height:117px;background:#c4c4c4"></div>
<div style="left:803px;top:326px;width:1px;height:117px;background:#b0b0b0"></div>
</body></html>
